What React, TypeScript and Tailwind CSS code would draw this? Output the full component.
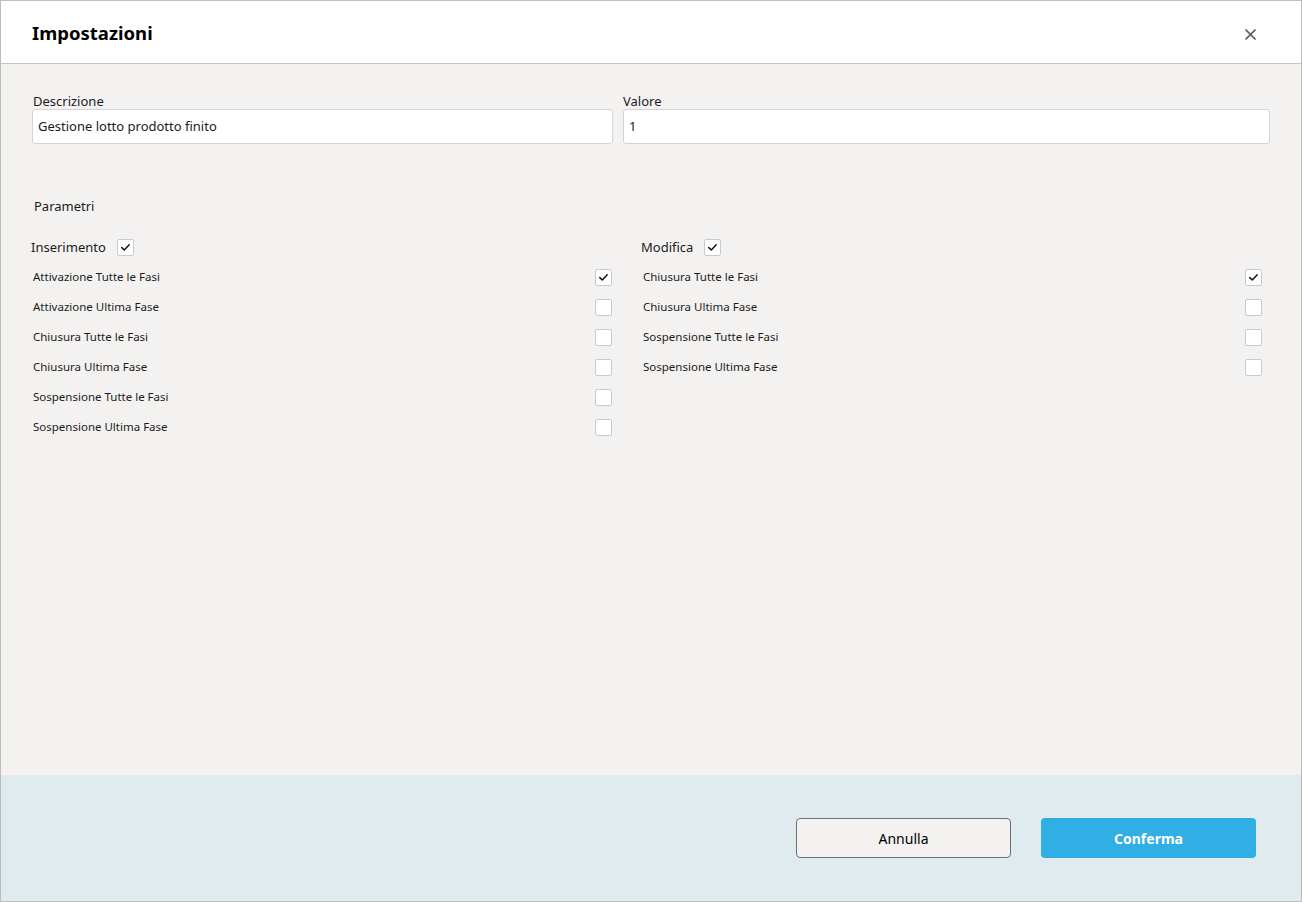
import React from "react";

function Check({ checked }: { checked?: boolean }) {
  return (
    <div className="w-[17px] h-[17px] shrink-0 rounded-[2px] border border-[#c9c9d6] bg-white flex items-center justify-center">
      {checked && (
        <svg width="11" height="11" viewBox="0 0 11 11" fill="none">
          <path d="M1.8 5.6 L4.3 8 L9.2 2.8" stroke="#111" strokeWidth="1.5" strokeLinecap="round" strokeLinejoin="round" />
        </svg>
      )}
    </div>
  );
}

function Row({ label, checked }: { label: string; checked?: boolean }) {
  return (
    <div className="h-[30px] flex items-center justify-between">
      <span className="text-[11.5px] text-[#1b1b1b] pl-[1px]">{label}</span>
      <Check checked={checked} />
    </div>
  );
}

export default function App() {
  const font = { fontFamily: '"Noto Sans", "Open Sans", sans-serif' };
  return (
    <div style={font} className="w-[1302px] h-[902px] border border-[#bdbdbd] flex flex-col bg-[#f3f2f1] text-[#1b1b1b]">
      <div className="h-[63px] shrink-0 bg-white border-b border-[#c4c4c4] flex items-center justify-between pl-[31px] pr-[45px]">
        <h1 className="text-[18.5px] font-bold text-black leading-none mt-[2px]">Impostazioni</h1>
        <svg width="11" height="11" viewBox="0 0 11 11" className="mt-[4px]">
          <path d="M1 1 L10 10 M10 1 L1 10" stroke="#555" strokeWidth="1.7" strokeLinecap="round" />
        </svg>
      </div>
      <div className="flex-1 pl-[31px] pt-[29px]">
        <div className="flex gap-[10px]">
          <div className="w-[581px]">
            <div className="text-[13px] leading-[16px] pl-[1px]">Descrizione</div>
            <div className="h-[35px] bg-white border border-[#d3d3de] rounded-[3px] flex items-center px-[5px] text-[13px]">
              Gestione lotto prodotto finito
            </div>
          </div>
          <div className="w-[647px]">
            <div className="text-[13px] leading-[16px]">Valore</div>
            <div className="h-[35px] bg-white border border-[#d3d3de] rounded-[3px] flex items-center px-[5px] text-[13px]">
              1
            </div>
          </div>
        </div>
        <div className="text-[13px] mt-[53px] pl-[2px] leading-[18px]">Parametri</div>
        <div className="flex mt-[18px]">
          <div className="w-[580px]">
            <div className="flex items-center gap-[11px] h-[29px] -ml-[1px]">
              <span className="text-[13px]">Inserimento</span>
              <Check checked />
            </div>
            <Row label="Attivazione Tutte le Fasi" checked />
            <Row label="Attivazione Ultima Fase" />
            <Row label="Chiusura Tutte le Fasi" />
            <Row label="Chiusura Ultima Fase" />
            <Row label="Sospensione Tutte le Fasi" />
            <Row label="Sospensione Ultima Fase" />
          </div>
          <div className="w-[620px] ml-[30px]">
            <div className="flex items-center gap-[11px] h-[29px] -ml-[1px]">
              <span className="text-[13px]">Modifica</span>
              <Check checked />
            </div>
            <Row label="Chiusura Tutte le Fasi" checked />
            <Row label="Chiusura Ultima Fase" />
            <Row label="Sospensione Tutte le Fasi" />
            <Row label="Sospensione Ultima Fase" />
          </div>
        </div>
      </div>
      <div className="h-[126px] shrink-0 bg-[#e0ebf0] flex items-center justify-end gap-[30px] pr-[45px]">
        <button className="w-[215px] h-[40px] rounded-[4px] border border-[#707070] bg-[#f3f2f1] text-[14px] text-black">
          Annulla
        </button>
        <button className="w-[215px] h-[40px] rounded-[4px] bg-[#31aee3] text-[14px] font-bold text-white">
          Conferma
        </button>
      </div>
    </div>
  );
}
